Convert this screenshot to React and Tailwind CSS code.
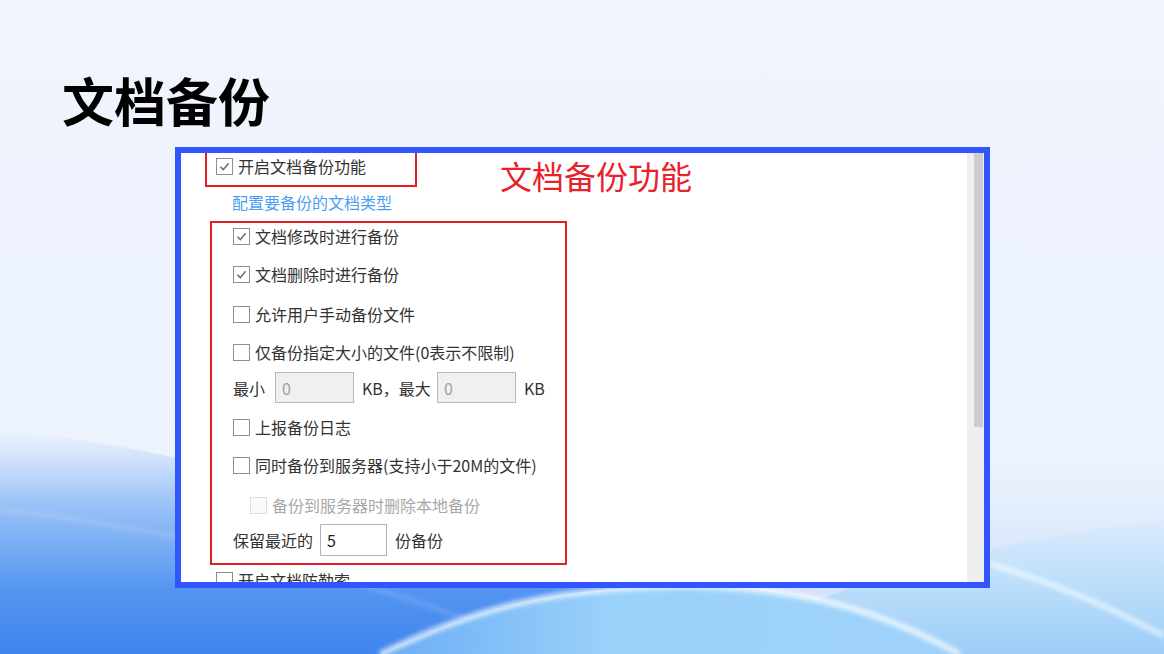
import React from 'react';

const font = "font-['Noto_Sans_CJK_SC','Noto_Sans',sans-serif]";

function CheckBox({ checked, disabled }) {
  return (
    <span
      className={
        'flex h-[17px] w-[17px] shrink-0 items-center justify-center border ' +
        (disabled ? 'border-[#dedede] bg-[#fafafa]' : 'border-[#8f8f8f] bg-white')
      }
    >
      {checked && (
        <svg width="13" height="13" viewBox="0 0 13 13">
          <polyline points="2.5,6.8 5.3,9.6 10.6,3.3" fill="none" stroke="#666" strokeWidth="1.4" />
        </svg>
      )}
    </span>
  );
}

function Option({ label, checked, disabled, className = '' }) {
  return (
    <div className={'flex h-5 items-center gap-[5px] ' + className}>
      <CheckBox checked={checked} disabled={disabled} />
      <span className={disabled ? 'text-[#a8a8a8]' : 'text-[#333]'}>{label}</span>
    </div>
  );
}

function NumBox({ value, disabled, className = '' }) {
  return (
    <div
      className={
        'flex items-center border pl-[6px] ' +
        (disabled ? 'border-[#b9b9b9] bg-[#f0f0f0] text-[#a0a0a0]' : 'border-[#b3b3b3] bg-white text-[#222]') +
        ' ' +
        className
      }
    >
      {value}
    </div>
  );
}

function Backdrop() {
  return (
    <svg className="absolute inset-0" width="1164" height="654" viewBox="0 0 1164 654" preserveAspectRatio="none">
      <defs>
        <linearGradient id="base" x1="0" y1="0" x2="0" y2="1">
          <stop offset="0" stopColor="#eff4fd" />
          <stop offset="0.7" stopColor="#edf3fd" />
          <stop offset="1" stopColor="#c6dcfa" />
        </linearGradient>
        <linearGradient id="left" gradientUnits="userSpaceOnUse" x1="0" y1="430" x2="0" y2="654">
          <stop offset="0" stopColor="#8ab8f5" stopOpacity="0" />
          <stop offset="0.35" stopColor="#7cb0f4" stopOpacity="0.75" />
          <stop offset="0.7" stopColor="#5596f1" />
          <stop offset="1" stopColor="#3f85ee" />
        </linearGradient>
        <linearGradient id="hill" x1="0" y1="0" x2="1" y2="0">
          <stop offset="0" stopColor="#6aacf6" />
          <stop offset="0.4" stopColor="#9bd2fa" />
          <stop offset="1" stopColor="#9fd2fa" />
        </linearGradient>
        <linearGradient id="corner" gradientUnits="userSpaceOnUse" x1="0" y1="500" x2="0" y2="654">
          <stop offset="0" stopColor="#d6eafc" stopOpacity="0" />
          <stop offset="0.5" stopColor="#bfe0fb" />
          <stop offset="1" stopColor="#9ccdf8" />
        </linearGradient>
        <filter id="soft">
          <feGaussianBlur stdDeviation="2.5" />
        </filter>
      </defs>
      <rect width="1164" height="654" fill="url(#base)" />
      <path d="M0 430 C220 450 430 530 640 590 C780 625 880 645 960 654 L0 654 Z" fill="url(#left)" />
      <path d="M700 654 C820 590 960 545 1164 520 L1164 654 Z" fill="url(#corner)" />
      <path d="M0 510 C200 530 400 590 560 654" fill="none" stroke="#ffffff" strokeOpacity="0.3" strokeWidth="2" filter="url(#soft)" />
      <path d="M380 654 C470 612 540 588 680 586 C820 586 900 622 960 654 Z" fill="url(#hill)" />
      <path d="M380 654 C470 612 540 588 680 586 C820 586 900 622 960 654" fill="none" stroke="#ffffff" strokeOpacity="0.85" strokeWidth="5" filter="url(#soft)" />
      <path d="M990 564 C1060 585 1120 612 1164 636" fill="none" stroke="#ffffff" strokeOpacity="0.8" strokeWidth="4" filter="url(#soft)" />
    </svg>
  );
}

export default function App() {
  return (
    <div className={'relative h-[654px] w-[1164px] overflow-hidden bg-[#eff4fd] text-[16px] ' + font}>
      <Backdrop />

      <div className="relative flex flex-col">
        <h1 className="pl-[62px] pt-[74px] text-[52px] font-bold leading-none text-black">文档备份</h1>

        {/* settings panel */}
        <div className="ml-[175px] mt-[21px] flex h-[441px] w-[815px] border-[6px] border-[#3355fd] bg-white">
          <div className="flex-1 overflow-hidden">
            <div className="flex h-[34px] items-start">
              <div className="ml-[24px] h-[34px] w-[212px] border-2 border-t-0 border-[#e41e26] pl-[9px] pt-[3px]">
                <Option label="开启文档备份功能" checked />
              </div>
              <div className="ml-[83px] mt-[2px] text-[32px] leading-[40px] text-[#e8212b]">文档备份功能</div>
            </div>

            <div className="mt-[5px] pl-[51px] leading-5 text-[#4a9ff0]">配置要备份的文档类型</div>

            <div className="ml-[29px] mt-[9px] h-[344px] w-[357px] border-2 border-[#e41e26] pl-[21px]">
              <Option className="mt-[3px]" label="文档修改时进行备份" checked />
              <Option className="mt-[18px]" label="文档删除时进行备份" checked />
              <Option className="mt-[20px]" label="允许用户手动备份文件" />
              <Option className="mt-[18px]" label="仅备份指定大小的文件(0表示不限制)" />
              <div className="mt-[10px] flex h-[31px] items-center text-[#333]">
                <span>最小</span>
                <NumBox className="ml-[10px] h-[31px] w-[79px]" value="0" disabled />
                <span className="ml-[8px]">KB，最大</span>
                <NumBox className="ml-[6px] h-[31px] w-[79px]" value="0" disabled />
                <span className="ml-[8px]">KB</span>
              </div>
              <Option className="mt-[14px]" label="上报备份日志" />
              <Option className="mt-[18px]" label="同时备份到服务器(支持小于20M的文件)" />
              <Option className="ml-[17px] mt-[20px]" label="备份到服务器时删除本地备份" disabled />
              <div className="mt-[9px] flex h-[32px] items-center text-[#333]">
                <span>保留最近的</span>
                <NumBox className="ml-[7px] h-[32px] w-[67px]" value="5" />
                <span className="ml-[8px]">份备份</span>
              </div>
            </div>

            <Option className="ml-[35px] mt-[5px]" label="开启文档防勒索" />
          </div>

          {/* scrollbar */}
          <div className="flex w-[17px] justify-end bg-[#efefef]">
            <div className="mr-px h-[274px] w-[9px] bg-[#cdcdcd]" />
          </div>
        </div>
      </div>
    </div>
  );
}
